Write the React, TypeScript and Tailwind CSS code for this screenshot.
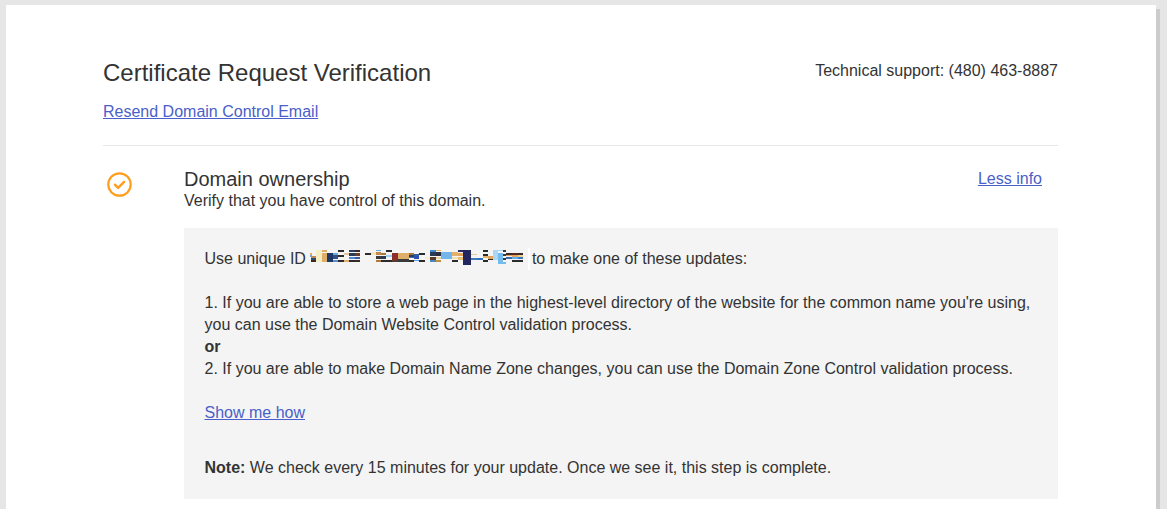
// pixelated id: [x, y, w, h, colour], origin at the top left of the svg
const blocks: [number, number, number, number, string][] = [
  [0, 5, 2, 2, "#e8a95c"], [0, 7, 2, 2, "#6caadd"],
  [1, 8, 5, 2, "#c08a50"], [1, 10, 5, 2, "#2b4a70"], [1, 12, 5, 2, "#3a2a20"],
  [6, 2, 6, 12, "#f5eec4"],
  [12, 2, 5, 2, "#dfae69"], [12, 5, 5, 9, "#dfae69"],
  [17, 5, 6, 9, "#1d3a66"],
  [23, 5, 5, 2, "#6caadd"], [23, 7, 5, 4, "#2f4f86"], [23, 12, 5, 2, "#5a8ed0"],
  [28, 2, 6, 2, "#2b2b2b"], [28, 7, 6, 2, "#2b2b2b"], [28, 12, 6, 2, "#2b2b2b"],
  [34, 5, 5, 2, "#e8c79a"], [34, 12, 5, 2, "#dfae69"],
  [39, 2, 6, 2, "#2f3f5f"], [39, 5, 6, 3, "#2b3a55"], [39, 9, 6, 2, "#4b86d0"], [39, 12, 6, 2, "#2a2a30"],
  [45, 2, 5, 2, "#3a2a2a"], [45, 5, 5, 3, "#6b3b2b"], [45, 9, 5, 2, "#3a5aa0"], [45, 12, 5, 2, "#3a2a20"],
  [55, 5, 6, 2, "#2b2b2b"],
  [61, 4, 5, 3, "#f5e6c0"],
  [66, 2, 5, 1, "#6caadd"], [66, 4, 5, 3, "#c08a50"], [66, 8, 5, 3, "#3a3a3a"], [66, 12, 5, 2, "#b07a40"],
  [71, 5, 5, 2, "#b0763a"], [71, 8, 5, 3, "#2b3a55"], [71, 12, 5, 2, "#2b2b2b"],
  [76, 2, 6, 2, "#2b2b2b"], [76, 7, 6, 2, "#9bd3f0"], [76, 12, 6, 2, "#2b2b2b"],
  [82, 5, 6, 7, "#8a2f2c"], [82, 12, 6, 2, "#5a3a2a"],
  [88, 5, 11, 6, "#dfae69"], [88, 11, 11, 3, "#3a3a3a"],
  [99, 5, 5, 2, "#a8713a"], [99, 7, 5, 2, "#2b3a55"], [99, 9, 5, 1, "#3b6ac0"], [99, 12, 5, 2, "#3a2a20"],
  [104, 6, 5, 2, "#2f5fa0"], [104, 8, 5, 3, "#2f4fb0"], [104, 12, 5, 1, "#5aa0e0"],
  [109, 5, 6, 2, "#2b2b2b"], [109, 12, 6, 2, "#2b2b2b"],
  [115, 9, 5, 2, "#f5eec4"],
  [120, 2, 6, 2, "#3a8ad0"], [120, 4, 6, 4, "#2b3a55"], [120, 9, 6, 3, "#5a3a2a"], [120, 12, 6, 2, "#4a86c0"],
  [126, 2, 5, 1, "#e5b060"], [126, 4, 5, 4, "#2b3040"], [126, 9, 5, 2, "#e5d5a0"], [126, 12, 5, 2, "#c09040"],
  [131, 4, 11, 7, "#74b6ec"],
  [142, 4, 6, 4, "#e3b06e"], [142, 9, 6, 2, "#f0dfb0"], [142, 12, 6, 2, "#2b2b2b"],
  [148, 2, 5, 2, "#2b2b5f"], [148, 5, 5, 3, "#e3a55e"], [148, 9, 5, 3, "#e8c070"],
  [153, 2, 8, 15, "#22265f"],
  [161, 6, 6, 1, "#e8c79a"], [161, 10, 6, 2, "#3a7ac0"],
  [167, 10, 6, 2, "#2f6fc0"],
  [173, 2, 5, 2, "#2b2b2b"], [173, 6, 5, 2, "#2b2b2b"], [173, 8, 5, 2, "#e3b06e"], [173, 12, 5, 2, "#2b2b2b"],
  [178, 8, 5, 3, "#e3a55e"], [178, 11, 5, 1, "#2b2b2b"],
  [183, 2, 5, 10, "#a9d7f5"],
  [188, 2, 5, 1, "#a9d7f5"], [188, 5, 5, 11, "#74bcf0"],
  [193, 2, 3, 2, "#3a3a3a"], [193, 6, 3, 2, "#3a3a3a"], [193, 10, 3, 2, "#3a3a3a"], [193, 14, 3, 2, "#74bcf0"],
  [196, 5, 6, 2, "#3a2a2a"], [196, 7, 6, 1, "#e3a55e"], [196, 9, 6, 2, "#3a6ab0"],
  [202, 5, 6, 2, "#5a2a20"], [202, 7, 6, 2, "#e3a55e"], [202, 9, 6, 2, "#62aee8"], [202, 12, 6, 2, "#2b2b2b"],
  [208, 5, 5, 2, "#3a2a2a"], [208, 7, 5, 2, "#f0d090"], [208, 9, 5, 2, "#3a7ac0"], [208, 12, 5, 2, "#2b2b2b"],
  [218, 0, 2, 22, "#ffffff"],
]

export default function App() {
  return (
    <div className="h-[509px] overflow-hidden bg-[#e6e6e6] pt-[5px] pl-[6px] font-['Liberation_Sans',Arial,sans-serif] text-[16px] leading-[22px] text-[#333333]">
      <div className="w-[1154px] h-[504px] flex">
        <div className="w-[1150px] bg-white pl-[97px] pr-[98px] pt-[53px]">
          {/* Header */}
          <div className="flex justify-between items-start pb-[22px] border-b border-[#e6e6e6]">
            <div>
              <h1 className="text-[24px] leading-[30px] font-normal">Certificate Request Verification</h1>
              <a href="#" className="block mt-[13px] text-[#4a5fc9] underline">Resend Domain Control Email</a>
            </div>
            <div className="mt-[2px]">Technical support: (480) 463-8887</div>
          </div>

          {/* Domain ownership */}
          <div className="flex mt-[22px]">
            <div className="w-[81px] shrink-0 pl-[4px] pt-[4px]">
              <svg width="25" height="25" viewBox="0 0 25 25" fill="none">
                <circle cx="12.5" cy="12.5" r="11.2" stroke="#ff9d1c" strokeWidth="2.2" />
                <path d="M7.9 12.7l3.2 3.2 6-6" stroke="#ff9d1c" strokeWidth="2.4" strokeLinecap="round" strokeLinejoin="round" />
              </svg>
            </div>
            <div className="flex-1">
              <div className="flex justify-between">
                <div>
                  <h2 className="text-[20px] leading-[22px] font-normal">Domain ownership</h2>
                  <p className="mt-[1px] leading-[20px]">Verify that you have control of this domain.</p>
                </div>
                <a href="#" className="mr-[16px] text-[#4a5fc9] underline">Less info</a>
              </div>

              <div className="mt-[17px] h-[271px] bg-[#f4f4f4] pl-[20.5px] pr-[20px] pt-[20px]">
                <div className="flex h-[22px] items-start whitespace-nowrap">
                  <span>Use unique ID</span>
                  <svg width="220" height="22" viewBox="0 0 220 22" className="ml-[4.5px] shrink-0" shapeRendering="crispEdges">
                    {blocks.map(([x, y, w, h, fill], i) => (
                      <rect key={i} x={x} y={y} width={w} height={h} fill={fill} />
                    ))}
                  </svg>
                  <span className="ml-[1.5px]">to make one of these updates:</span>
                </div>
                <p className="mt-[22px]">
                  1. If you are able to store a web page in the highest-level directory of the website for the common name you're using, you can use the Domain Website Control validation process.
                </p>
                <p className="font-bold">or</p>
                <p>2. If you are able to make Domain Name Zone changes, you can use the Domain Zone Control validation process.</p>
                <a href="#" className="block mt-[22px] text-[#4a5fc9] underline">Show me how</a>
                <p className="mt-[33px]"><strong>Note:</strong> We check every 15 minutes for your update. Once we see it, this step is complete.</p>
              </div>
            </div>
          </div>
        </div>
        <div className="w-[4px] mt-[4px] bg-[#cccccc]" />
      </div>
    </div>
  )
}
